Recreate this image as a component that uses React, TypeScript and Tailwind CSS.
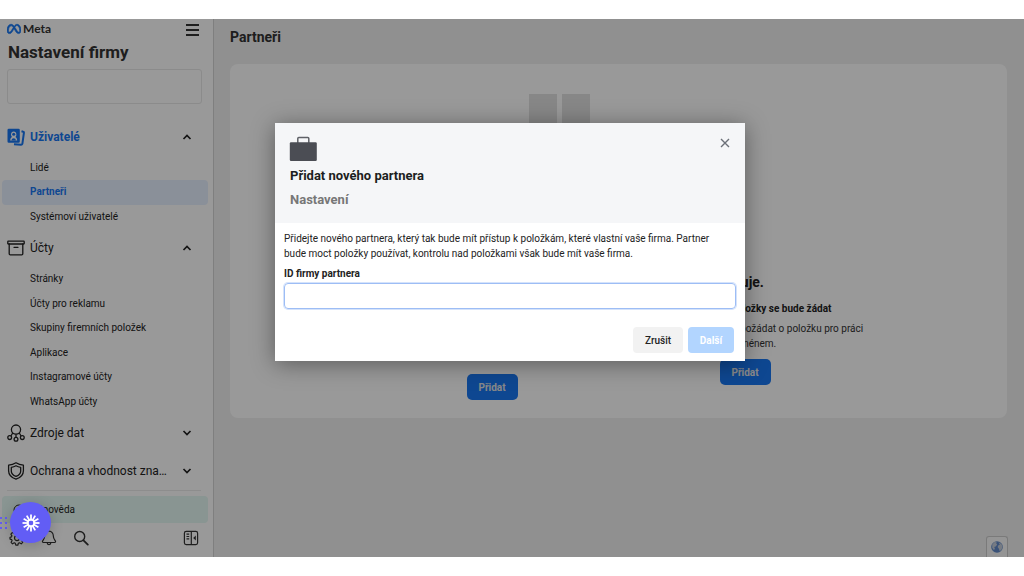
import { useState } from "react";
import type { ReactNode } from "react";
import { FaMeta } from "react-icons/fa6";

type Section = {
  id: string;
  label: string;
  icon: ReactNode;
  active?: boolean;
  open?: boolean;
  items?: string[];
};

function UsersIcon() {
  return (
    <svg viewBox="0 0 18 18" className="size-[18px] shrink-0" fill="none" aria-hidden="true">
      <path d="M1.800.800h9.700a1.300 1.300 0 0 1 1.300 1.300v11.400a1.300 1.300 0 0 1-1.300 1.300H1.800A1.300 1.300 0 0 1 .500 13.500V2.100A1.300 1.300 0 0 1 1.800.800Z" fill="#1877f2" />
      <path d="M3.200 12.600c0-2 .8-3.100 1.800-3.600A3 3 0 0 1 4 6.600C4 4.600 5.200 3.500 6.700 3.500s2.700 1.100 2.700 3.100c0 1-.4 1.900-1 2.400 1 .5 1.800 1.600 1.800 3.600Z" fill="#fff" />
      <circle cx="6.700" cy="6.300" r="1.500" fill="#1877f2" />
      <path d="M4.600 12.600c0-1.500.8-2.300 2.100-2.300s2.100.8 2.100 2.300Z" fill="#1877f2" />
      <path d="m14.500 3.300 1.700.5a.9.900 0 0 1 .7 1l-1.500 10.900a1.300 1.300 0 0 1-1.500 1.100L7 16.300" stroke="#1877f2" strokeWidth="2" />
    </svg>
  );
}

function BoxIcon() {
  return (
    <svg viewBox="0 0 18 18" className="size-[18px] shrink-0" fill="none" stroke="currentColor" strokeWidth="1.300" strokeLinejoin="round" aria-hidden="true">
      <rect x="0.800" y="2.200" width="16.400" height="2.800" rx="0.500" />
      <path d="M2.200 5v9.800a1 1 0 0 0 1 1h11.600a1 1 0 0 0 1-1V5M7 8.300h4" strokeLinecap="round" />
    </svg>
  );
}

function DataIcon() {
  return (
    <svg viewBox="0 0 18 18" className="size-[18px] shrink-0" fill="none" stroke="currentColor" strokeWidth="1.300" aria-hidden="true">
      <circle cx="9" cy="5.600" r="4.600" />
      <circle cx="2.700" cy="13.600" r="1.900" />
      <circle cx="9" cy="15.300" r="1.900" />
      <circle cx="15.300" cy="13.600" r="1.900" />
      <path d="M9 10.200v3.200M5.700 9 3.900 12M12.300 9l1.800 3" />
    </svg>
  );
}

function ShieldIcon() {
  return (
    <svg viewBox="0 0 18 18" className="size-[18px] shrink-0" fill="none" stroke="currentColor" strokeWidth="1.300" strokeLinejoin="round" aria-hidden="true">
      <path d="M9 .8c2.300 1.500 4.600 2.200 7.400 2.400v5.500c0 4-2.800 6.900-7.400 8.500-4.600-1.600-7.400-4.500-7.400-8.500V3.200C4.400 3 6.700 2.300 9 .8Z" />
      <path d="M9 3.800c1.500.9 3 1.400 4.700 1.600v3.500c0 2.500-1.700 4.300-4.700 5.500-3-1.200-4.700-3-4.700-5.500V5.400C6 5.200 7.500 4.700 9 3.800Z" />
    </svg>
  );
}

function Chevron({ up }: { up: boolean }) {
  return (
    <svg viewBox="0 0 10 10" className="mr-5 size-2.5 shrink-0" fill="none" stroke="#222" strokeWidth="1.700" aria-hidden="true">
      <path d={up ? "M1.500 7 5 3.500 8.500 7" : "M1.500 3 5 6.500 8.500 3"} />
    </svg>
  );
}

const sections: Section[] = [
  {
    id: "users",
    label: "Uživatelé",
    icon: <UsersIcon />,
    active: true,
    open: true,
    items: ["Lidé", "Partneři", "Systémoví uživatelé"],
  },
  {
    id: "accounts",
    label: "Účty",
    icon: <BoxIcon />,
    open: true,
    items: ["Stránky", "Účty pro reklamu", "Skupiny firemních položek", "Aplikace", "Instagramové účty", "WhatsApp účty"],
  },
  { id: "data", label: "Zdroje dat", icon: <DataIcon /> },
  { id: "safety", label: "Ochrana a vhodnost zna…", icon: <ShieldIcon /> },
];

function SidebarSection({ section }: { section: Section }) {
  return (
    <section>
      <button
        type="button"
        aria-expanded={!!section.open}
        className={
          section.active
            ? "flex h-[38px] w-full items-center gap-[5px] pr-px pl-[7px] text-left text-xs font-bold text-[#1877f2]"
            : "flex h-[38px] w-full items-center gap-[5px] pr-px pl-[7px] text-left text-xs text-[#222]"
        }
      >
        {section.icon}
        <span className="flex-1 whitespace-nowrap">{section.label}</span>
        <Chevron up={!!section.open} />
      </button>
      {section.items && (
        <ul className={section.items.length > 3 ? "grid h-[147px] auto-rows-fr pr-[5px] pl-0.5" : "grid h-[73px] auto-rows-fr pr-[5px] pl-0.5"}>
          {section.items.map((item) => (
            <li key={item} className="flex">
              <a
                href="#"
                className={
                  item === "Partneři"
                    ? "flex flex-1 items-center rounded-sm bg-[#e7f0ff] pl-7 text-[10px] leading-4 font-bold text-[#1877f2]"
                    : "flex flex-1 items-center rounded-sm pl-7 text-[10px] leading-4 text-[#222]"
                }
              >
                {item}
              </a>
            </li>
          ))}
        </ul>
      )}
    </section>
  );
}

function Sidebar() {
  return (
    <nav className="flex w-[214px] shrink-0 flex-col border-r border-[#d4d4d4] bg-white" aria-label="Nastavení firmy">
      <div className="flex h-[22px] items-center justify-between pr-[14px] pl-[7px]">
        <div className="flex items-center gap-0.5 pb-0.5 text-[#333]">
          <FaMeta className="size-[14px] text-[#1877f2]" stroke="currentColor" strokeWidth={30} aria-hidden="true" />
          <span className="font-[Lato,sans-serif] text-xs leading-4 font-bold">Meta</span>
        </div>
        <button type="button" aria-label="Nabídka" className="flex h-3 w-[13px] flex-col justify-between">
          <span className="h-0.5 w-full bg-[#333]" />
          <span className="h-0.5 w-full bg-[#333]" />
          <span className="h-0.5 w-full bg-[#333]" />
        </button>
      </div>
      <h1 className="pl-2 text-[17px] leading-[22px] font-bold text-[#333]">Nastavení firmy</h1>
      <div className="mt-1.5 mr-[11px] ml-[7px] flex">
        <input aria-label="Firma" className="h-[35px] min-w-0 flex-1 rounded-[3px] border border-[#e8e8e8] bg-white px-2 text-xs outline-none" />
      </div>
      <div className="mt-[14px]">
        {sections.map((section) => (
          <SidebarSection key={section.id} section={section} />
        ))}
      </div>
      <div className="mr-3 ml-[7px] border-t border-[#ececec]" />
      <a href="#" className="mt-[5px] mr-[5px] ml-0.5 flex h-[27px] shrink-0 items-center gap-[5px] rounded-sm bg-[#e4f8f3] pl-[11px] text-[10px] leading-4 text-[#222]">
        <svg viewBox="0 0 12 12" className="size-3" fill="none" stroke="currentColor" aria-hidden="true">
          <circle cx="6" cy="6" r="5" />
          <path d="M4.500 5a1.500 1.500 0 1 1 1.500 1.500v1M6 8.500v1" />
        </svg>
        Nápověda
      </a>
      <div className="mt-[7px] flex h-4 items-center pr-[14px] pl-[9px] text-[#333]">
        <button type="button" aria-label="Nastavení" className="w-8">
          <svg viewBox="0 0 16 16" className="size-4" fill="none" stroke="currentColor" strokeWidth="1.200" strokeLinejoin="round" aria-hidden="true">
            <path d="m6.800 1-.5 2-1 .5-1.900-1-1.500 1.600 1 1.800-.4 1L1 7.300v1.800l1.700.5.4 1-1 1.700 1.400 1.500 1.800-1 1 .5.500 1.900h2l.6-1.900 1-.5 1.800 1 1.500-1.500-1-1.700.5-1 1.800-.5V7.300l-1.800-.4-.5-1 1-1.800-1.500-1.600-1.800 1-1-.5-.6-2Z" />
            <circle cx="8" cy="8.100" r="2.500" />
          </svg>
        </button>
        <button type="button" aria-label="Oznámení" className="w-8">
          <svg viewBox="0 0 16 16" className="size-4" fill="none" stroke="currentColor" strokeWidth="1.200" strokeLinejoin="round" aria-hidden="true">
            <path d="M8 1.200c-2.700 0-4.300 2-4.300 4.600 0 3-1.200 3.800-2.100 5.200-.4.700 0 1.500.8 1.500h11.200c.8 0 1.200-.8.800-1.500-.9-1.400-2.100-2.200-2.100-5.200 0-2.600-1.600-4.600-4.300-4.600Z" />
            <path d="M6.200 12.800c.2 1.200.8 1.900 1.800 1.900s1.600-.7 1.800-1.900" />
          </svg>
        </button>
        <button type="button" aria-label="Hledat" className="w-8">
          <svg viewBox="0 0 16 16" className="size-4" fill="none" stroke="currentColor" strokeWidth="1.400" strokeLinecap="round" aria-hidden="true">
            <circle cx="6.700" cy="6.500" r="5" />
            <path d="m10.500 10.300 4.300 4.300" strokeWidth="1.800" />
          </svg>
        </button>
        <button type="button" aria-label="Sbalit panel" className="ml-auto">
          <svg viewBox="0 0 16 16" className="size-4" fill="none" stroke="currentColor" strokeWidth="1.200" aria-hidden="true">
            <rect x="1.400" y="1.400" width="13.200" height="13.200" rx="1.800" />
            <path d="M8.300 1.400v13.200M3.500 4.200h2.700M3.500 6.500h2.700M3.500 8.800h2.700" />
            <path d="m12.800 5.600-2.600 2.400 2.600 2.400Z" fill="currentColor" stroke="none" />
          </svg>
        </button>
      </div>
    </nav>
  );
}

function PartnersPage() {
  return (
    <main className="flex min-w-0 flex-1 flex-col bg-[#f0f0f0] px-4 text-[#333]">
      <h2 className="mt-[9px] text-sm leading-[18px] font-bold">Partneři</h2>
      <div className="mt-[18px] mr-px flex flex-col items-center rounded-lg bg-white pt-[30px] pb-[18px]">
        <div className="mr-[119px] flex gap-[5px]">
          <span className="h-[58px] w-7 bg-[#e2e2e2]" />
          <span className="h-[58px] w-7 bg-[#e2e2e2]" />
        </div>
        <h3 className="mt-[120px] text-sm leading-5 font-bold text-[#222]">Zvolte partnera, se kterým firma spolupracuje.</h3>
        <div className="mt-[9px] grid grid-cols-2 gap-[13px] text-center text-[10px] leading-[15px]">
          <div className="w-60">
            <h4 className="font-bold text-[#222]">Partner, kterému dáte přístup</h4>
            <p className="mt-[5px]">Partnerovi můžete udělit přístup k položkám, které vlastní vaše firma.</p>
            <button type="button" className="mt-[23px] h-[26px] w-[51px] rounded-[5px] bg-[#1877f2] font-bold text-[#e4e4e4]">Přidat</button>
          </div>
          <div className="w-60">
            <h4 className="font-bold text-[#222]">Partner, o jehož položky se bude žádat</h4>
            <p className="mt-[5px]">U svého partnera můžete požádat o položku pro práci jejím jménem.</p>
            <button type="button" className="mt-2 h-[26px] w-[51px] rounded-[5px] bg-[#1877f2] font-bold text-[#e4e4e4]">Přidat</button>
          </div>
        </div>
      </div>
      <div className="mt-auto flex justify-end">
        <button type="button" aria-label="Jazyk" className="flex h-[21px] w-[22px] items-center justify-center rounded-t-[3px] border border-b-0 border-[#ccc] bg-[#f8f8f8]">
          <svg viewBox="0 0 12 12" className="size-3" aria-hidden="true">
            <circle cx="6" cy="6" r="5.800" fill="#6189c8" />
            <path d="M1.300 3.200 3.600.9l2.200.4-.6 1.300 1 .9-1.500 1.900-1.500.5.700 1.600-.9 1.700L1.200 6.700ZM7.500 1.200l3 1.700 1 2.800-1 3-1.800 1.500-.8-2.500-1.300-1.600 1-2 1.300-.3Z" fill="#c5ceda" />
          </svg>
        </button>
      </div>
    </main>
  );
}

function AddPartnerDialog() {
  const [partnerId, setPartnerId] = useState("");
  return (
    <div role="dialog" aria-modal="true" aria-labelledby="dialog-title" className="w-[470px] max-w-full bg-white shadow-[0_3px_22px_rgba(0,0,0,0.4)]">
      <header className="flex items-start justify-between bg-[#f5f6f8] px-[15px] pt-[13px] pb-[14px]">
        <div>
          <svg viewBox="0 0 28 26" className="-ml-px h-[26px] w-7" aria-hidden="true">
            <path d="M8.800 7V2.400a1 1 0 0 1 1-1h9a1 1 0 0 1 1 1V7" fill="none" stroke="#5f6167" strokeWidth="1.500" />
            <rect x="0.800" y="6.300" width="27" height="18.700" rx="1.200" fill="#4b4d54" />
          </svg>
          <h2 id="dialog-title" className="mt-1 text-[13px] leading-5 font-bold text-[#1c1e21]">Přidat nového partnera</h2>
          <p className="mt-1 text-[13px] leading-[19px] font-bold text-[#777]">Nastavení</p>
        </div>
        <button type="button" aria-label="Zavřít" className="mt-px flex h-3 w-2.5 items-center justify-center">
          <svg viewBox="0 0 10 10" className="size-2.5" fill="none" stroke="#6b7078" strokeWidth="1.400" aria-hidden="true">
            <path d="m1 1 8 8M9 1 1 9" />
          </svg>
        </button>
      </header>
      <div className="px-[9px] pt-2 pb-2 text-[10px] text-[#222]">
        <p className="pr-4 leading-[15px]">
          Přidejte nového partnera, který tak bude mít přístup k položkám, které vlastní vaše firma. Partner bude moct položky používat, kontrolu nad položkami však bude mít vaše firma.
        </p>
        <label htmlFor="partner-id" className="mt-[5px] block leading-[15px] font-bold">ID firmy partnera</label>
        <input
          id="partner-id"
          value={partnerId}
          onChange={(event) => setPartnerId(event.target.value)}
          className="mt-0.5 block h-[26px] w-full rounded-[4px] border border-[#9dbdf5] px-2 ring-1 ring-[#d5e3fb] outline-none"
        />
        <div className="mt-[18px] flex justify-end gap-[5px] pr-0.5">
          <button type="button" className="h-[26px] w-[50px] rounded-[4px] bg-[#f2f2f2] font-medium text-[#222]">Zrušit</button>
          <button type="button" className="h-[26px] w-[46px] rounded-[4px] bg-[#b2d5ff] font-bold text-white">Další</button>
        </div>
      </div>
    </div>
  );
}

function FloatingAssistant() {
  return (
    <div className="absolute bottom-[14px] left-0 flex items-center gap-0.5">
      <svg viewBox="0 0 8 14" className="h-[14px] w-2" fill="#645cf0" aria-hidden="true">
        <path d="M0 1h2v2H0zM5 1h2v2H5zM0 6h2v2H0zM5 6h2v2H5zM0 11h2v2H0zM5 11h2v2H5z" />
      </svg>
      <button type="button" aria-label="Asistent" className="flex size-[41px] items-center justify-center rounded-full bg-[#625df5] shadow-[0_2px_14px_rgba(0,0,0,0.2)]">
        <svg viewBox="-9 -9 18 18" className="size-[18px]" fill="none" stroke="#fff" strokeWidth="1.800" aria-hidden="true">
          {[0, 30, 60, 90, 120, 150, 180, 210, 240, 270, 300, 330].map((angle) => (
            <path key={angle} d="M0-2.600V-8.500" transform={`rotate(${angle})`} />
          ))}
          <circle r="3.200" strokeWidth="1.600" />
        </svg>
      </button>
    </div>
  );
}

export default function App() {
  return (
    <div className="flex min-h-screen flex-col bg-white py-[19px] font-[Roboto,'Liberation_Sans',sans-serif]">
      <div className="relative flex flex-1">
        <Sidebar />
        <PartnersPage />
        <div className="absolute inset-0 flex items-start justify-center overflow-hidden bg-black/40 pt-[104px] pr-1">
          <AddPartnerDialog />
        </div>
        <FloatingAssistant />
      </div>
    </div>
  );
}
